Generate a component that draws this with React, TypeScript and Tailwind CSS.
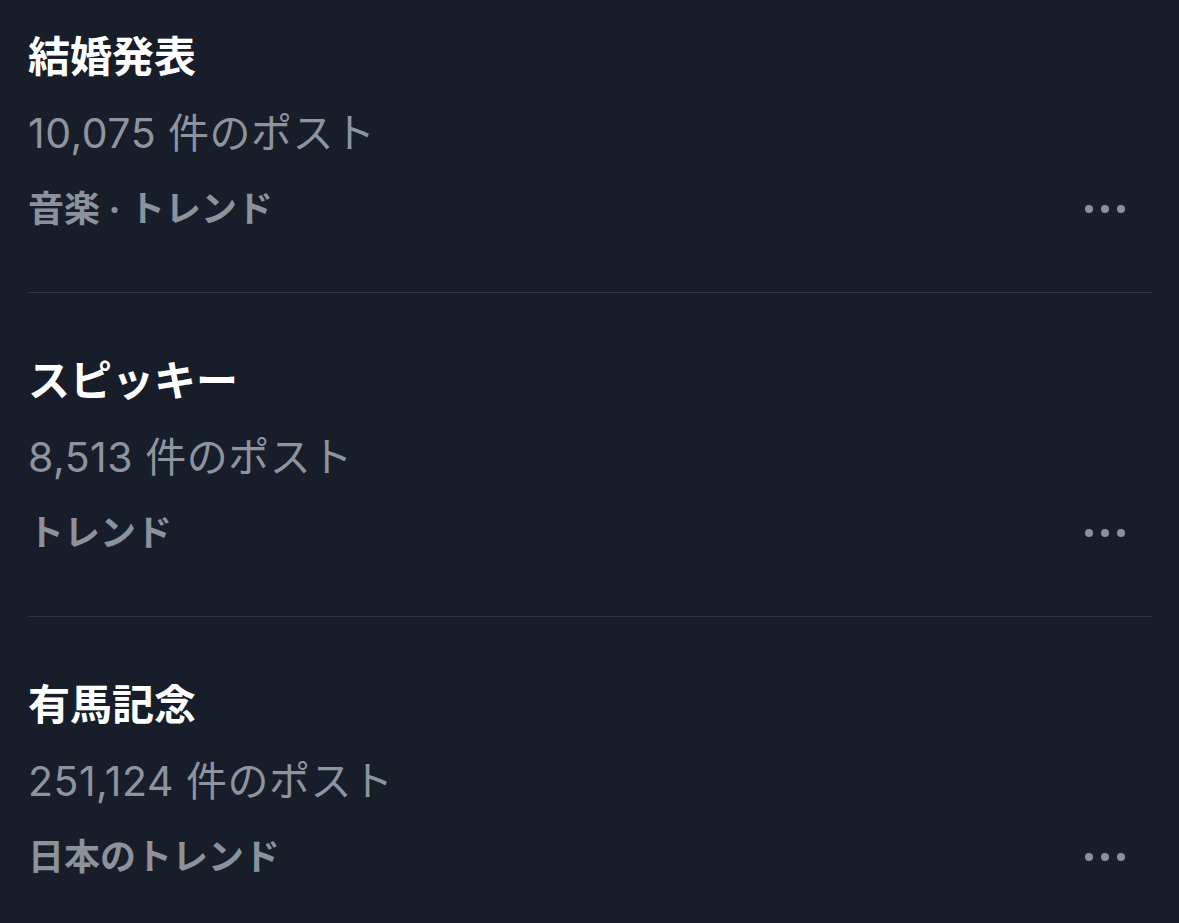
import React from "react";

const items = [
  { title: "結婚発表", count: "10,075", category: "音楽 · トレンド" },
  { title: "スピッキー", count: "8,513", category: "トレンド" },
  { title: "有馬記念", count: "251,124", category: "日本のトレンド" },
];

const font = { fontFamily: "Inter, 'Noto Sans CJK JP', sans-serif" };

function Dots() {
  return (
    <div className="flex items-center gap-[8px]">
      <span className="block w-[8px] h-[8px] rounded-full bg-[#8a919b]" />
      <span className="block w-[8px] h-[8px] rounded-full bg-[#8a919b]" />
      <span className="block w-[8px] h-[8px] rounded-full bg-[#8a919b]" />
    </div>
  );
}

export default function App() {
  return (
    <div
      className="w-[1179px] h-[923px] bg-[#171e29] pt-[19px] pl-[28px] pr-[27px] overflow-hidden"
      style={font}
    >
      {items.map((it, i) => (
        <div
          key={i}
          className={`${i > 0 ? "pt-[50px]" : ""} ${i < items.length - 1 ? "pb-[45px] border-b border-[#2e3540]" : ""}`}
        >
          <div className="h-[76px] flex items-center text-[42px] font-bold text-white leading-none">
            {it.title}
          </div>
          <div className="h-[76px] flex items-center text-[41px] tracking-[0.5px] text-[#8d949e] leading-none">
            {it.count} 件のポスト
          </div>
          <div className="h-[76px] flex items-center justify-between pr-[27px]">
            <span className="text-[36px] font-bold text-[#8b929c] leading-none">{it.category}</span>
            <Dots />
          </div>
        </div>
      ))}
    </div>
  );
}
